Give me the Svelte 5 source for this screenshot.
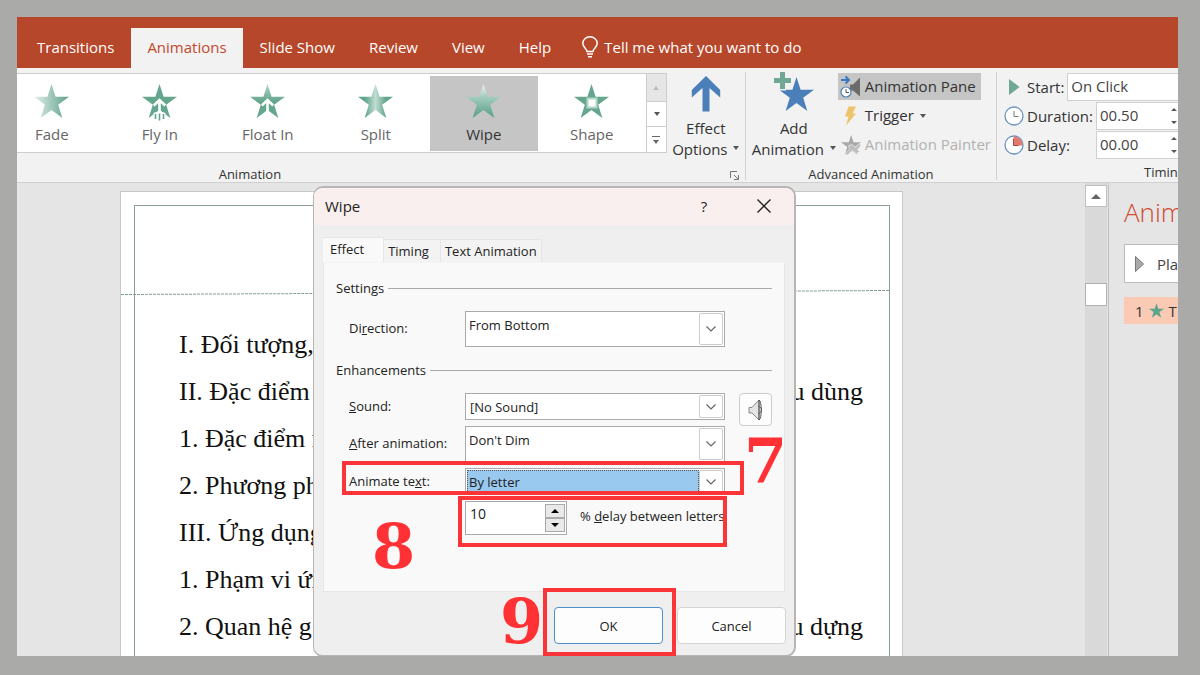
<script>
  const star = '17.5,0 21.6,12.7 35,12.7 24.2,20.7 28.3,34 17.5,25.9 6.7,34 10.8,20.7 0,12.7 13.4,12.7';

  const tabs = ['Transitions', 'Animations', 'Slide Show', 'Review', 'View', 'Help'];
  const effects = [
    { name: 'Fade', kind: 'fade' },
    { name: 'Fly In', kind: 'fly' },
    { name: 'Float In', kind: 'float' },
    { name: 'Split', kind: 'split' },
    { name: 'Wipe', kind: 'wipe' },
    { name: 'Shape', kind: 'shape' }
  ];
  const lines = [
    { start: 'I. Đối tượng,', end: '' },
    { start: 'II. Đặc điểm', end: 'u dùng' },
    { start: '1. Đặc điểm n', end: '' },
    { start: '2. Phương ph', end: '' },
    { start: 'III. Ứng dụng', end: '' },
    { start: '1. Phạm vi ứn', end: '' },
    { start: '2. Quan hệ g', end: 'u dựng' }
  ];
</script>

{#snippet chevron()}
  <span class="chevron">
    <svg viewBox="0 0 10 6" width="10" height="6"><path d="M.5.5 5 5 9.5.5" fill="none" stroke="#666" stroke-width="1.2" /></svg>
  </span>
{/snippet}

{#snippet caret()}
  <svg class="caret" viewBox="0 0 6 4" width="6" height="4"><path d="M0 0h6L3 4z" fill="#555" /></svg>
{/snippet}

<div class="page">
  <div class="window">
    <nav class="tabs">
      {#each tabs as tab}
        <button class="tab" class:active={tab === 'Animations'}>{tab}</button>
      {/each}
      <button class="tell">
        <svg viewBox="0 0 16 22" width="16" height="22" fill="none" stroke="#fff" stroke-width="1.5">
          <path d="M5 15.500c0-3-4.200-4-4.200-8.200a7.200 6.500 0 0 1 14.400 0c0 4.200-4.200 5.200-4.200 8.200zM5 18h6M6 20.700h4" />
        </svg>
        Tell me what you want to do
      </button>
    </nav>

    <div class="ribbon">
      <section class="group animation">
        <div class="tools">
          <div class="gallery">
            <div class="effects">
              {#each effects as effect}
                <button class="effect" class:selected={effect.kind === 'wipe'}>
                  <svg viewBox="0 0 36 38" width="36" height="38">
                    <defs>
                      <linearGradient id="g-fade"><stop offset="0" stop-color="#e4f0eb" /><stop offset="1" stop-color="#5b9f87" /></linearGradient>
                      <linearGradient id="g-float" x2="0" y2="1"><stop offset="0" stop-color="#b5d6ca" /><stop offset=".5" stop-color="#64a68e" /></linearGradient>
                      <linearGradient id="g-split"><stop offset=".2" stop-color="#60a48c" /><stop offset=".5" stop-color="#c2ddd3" /><stop offset=".8" stop-color="#60a48c" /></linearGradient>
                      <linearGradient id="g-wipe" x2="0" y2="1"><stop offset="0" stop-color="#f1f6f3" /><stop offset=".35" stop-color="#a8cfc1" /><stop offset="1" stop-color="#559e85" /></linearGradient>
                    </defs>
                    <polygon points={star} fill={effect.kind === 'fly' || effect.kind === 'shape' ? '#64a68e' : `url(#g-${effect.kind})`} />
                    {#if effect.kind === 'fly' || effect.kind === 'float'}
                      <path d="m11.800 21.500 5.700-5.500 5.700 5.500M17.500 16v12" fill="none" stroke="#fff" stroke-width="2.600" />
                    {/if}
                    {#if effect.kind === 'fly'}
                      <path d="M11.500 29 17.500 27l6 2v8h-12z" fill="#fff" />
                      <path d="M13.500 30v5M17.500 29.500v7M21.500 30v5" stroke="#64a68e" stroke-width="1.600" />
                    {/if}
                    {#if effect.kind === 'shape'}
                      <path d="M13.500 14.500h9v9h-9z" fill="#fff" stroke="#b4d6c9" stroke-width="2" />
                    {/if}
                  </svg>
                  <span>{effect.name}</span>
                </button>
              {/each}
            </div>
            <div class="scrollers">
              <button class="off" aria-label="Previous row"><svg viewBox="0 0 6 4" width="6" height="4"><path d="M0 4h6L3 0z" fill="#bbb" /></svg></button>
              <button aria-label="Next row">{@render caret()}</button>
              <button aria-label="More"><svg viewBox="0 0 8 8" width="8" height="8"><path d="M0 0h8v1H0zM1 4h6L4 8z" fill="#666" /></svg></button>
            </div>
          </div>
          <button class="big">
            <svg viewBox="0 0 30 36" width="30" height="36"><path d="M15 0 0.800 14v7.500L11.500 12v23.500h7V12l10.700 9.500V14z" fill="#4a7fba" /></svg>
            <span>Effect</span>
            <span>Options {@render caret()}</span>
          </button>
        </div>
        <h2>Animation
          <svg class="launcher" viewBox="0 0 9 9" width="9" height="9"><path d="M.5 7V.5H7M4 4l4 4M8.500 4v4.500H4" fill="none" stroke="#777" /></svg>
        </h2>
      </section>

      <section class="group advanced">
        <div class="tools">
          <button class="big add">
            <svg viewBox="0 0 42 40" width="42" height="40">
              <polygon points={star} transform="translate(6 5)" fill="#4a7fba" />
              <path d="M6-.5h7v6h6v7h-6v6H6v-6H0v-7h6z" fill="#f2f2f2" />
              <path d="M7 0h5v6h6v5h-6v6H7v-6H1V6h6z" fill="#70a893" />
            </svg>
            <span>Add</span>
            <span>Animation {@render caret()}</span>
          </button>
          <div class="stack">
            <button class="small pressed">
              <svg viewBox="0 0 22 24" width="22" height="24">
                <path d="M10 9.500h3l7-7v19l-7-6h-3z" fill="#6b6b6b" />
                <path d="M1 5h7M5.500 1.500 9 5 5.500 8.500" fill="none" stroke="#3b78bd" stroke-width="2" />
                <circle cx="6" cy="17" r="5" fill="#fff" stroke="#4a7fba" stroke-width="1.200" />
                <path d="M6 14v3.500h3" fill="none" stroke="#555" />
              </svg>
              <span>Animation Pane</span>
            </button>
            <button class="small">
              <svg viewBox="0 0 22 24" width="22" height="24"><path d="M8.500 2.500H16l-3.500 7H16L6 21.500l2.500-9H5z" fill="#efc36a" /></svg>
              <span>Trigger {@render caret()}</span>
            </button>
            <button class="small off" disabled>
              <svg viewBox="0 0 22 24" width="22" height="24"><polygon points={star} transform="translate(1 2) scale(.58)" fill="#a9a9a9" /><path d="m8.500 12.500 4-1 3 3 3.500-4 2 2-3.500 4 2 2-3 2-4-3-5 4.500-3-1 5-4.500z" fill="#bdbdbd" stroke="#f2f2f2" stroke-width=".6" /></svg>
              <span>Animation Painter</span>
            </button>
          </div>
        </div>
        <h2>Advanced Animation</h2>
      </section>

      <section class="group timing">
        <div class="stack">
          <div class="field">
            <svg viewBox="0 0 20 20" width="20" height="20"><path d="M5 2v16l10.500-8z" fill="#70a893" /></svg>
            <label for="start">Start:</label>
            <select id="start"><option>On Click</option></select>
          </div>
          <div class="field">
            <svg viewBox="0 0 20 20" width="20" height="20"><circle cx="10" cy="10" r="9" fill="#fff" stroke="#6d94c0" stroke-width="1.300" /><path d="M10 5v5.500h4.500" fill="none" stroke="#777" /></svg>
            <label class="wide" for="duration">Duration:</label>
            <input id="duration" value="00.50" />
            <span class="nudge"><svg viewBox="0 0 8 18" width="8" height="18"><path d="M1 4h6L4 1zM1 14h6l-3 3z" fill="#555" /></svg></span>
          </div>
          <div class="field">
            <svg viewBox="0 0 20 20" width="20" height="20"><circle cx="10" cy="10" r="9" fill="#fff" stroke="#6d94c0" stroke-width="1.300" /><path d="M9.500 10.500V1.500a8.500 8.500 0 0 1 9 9z" fill="#e5786d" /><path d="M9.500 4v6.500h5" fill="none" stroke="#a04a44" /></svg>
            <label class="wide" for="wait">Delay:</label>
            <input id="wait" value="00.00" />
            <span class="nudge"><svg viewBox="0 0 8 18" width="8" height="18"><path d="M1 4h6L4 1zM1 14h6l-3 3z" fill="#555" /></svg></span>
          </div>
        </div>
        <h2>Timing</h2>
      </section>
    </div>

    <main class="workspace">
      <div class="canvas">
        <article class="slide">
          <div class="frame">
            {#each lines as line}
              <p><span>{line.start}</span><span>{line.end}</span></p>
            {/each}
          </div>
          <svg class="guide" viewBox="0 0 768 5" height="5" preserveAspectRatio="none"><path d="M0 4.500 768 .5" stroke="#7f9c98" stroke-dasharray="3 1" /></svg>
        </article>
      </div>
      <div class="scrollbar">
        <button aria-label="Scroll up"><svg viewBox="0 0 10 5" width="10" height="5"><path d="M0 5h10L5 0z" fill="#666" /></svg></button>
        <div class="thumb"></div>
      </div>
      <aside class="pane">
        <h1>Anim</h1>
        <button class="play"><svg viewBox="0 0 9 16" width="9" height="16"><path d="M.5.500v15L8.500 8z" fill="#aaa" stroke="#777" /></svg>Play</button>
        <div class="entry">1 <svg viewBox="0 0 35 34" width="15" height="15"><polygon points={star} fill="#58a58a" /></svg> <span>T</span></div>
      </aside>

      <div class="dialog" role="dialog" aria-labelledby="dialog-title">
        <header>
          <h3 id="dialog-title">Wipe</h3>
          <button>?</button>
          <button aria-label="Close"><svg viewBox="0 0 14 14" width="14" height="14"><path d="m.5.500 13 13M13.500.500l-13 13" stroke="#222" stroke-width="1.400" /></svg></button>
        </header>
        <div class="dialog-tabs">
          <button class="current">Effect</button>
          <button class="timing-tab">Timing</button>
          <button>Text Animation</button>
        </div>
        <form class="sheet">
          <h4>Settings</h4>
          <div class="row direction">
            <label for="direction">Di<u>r</u>ection:</label>
            <div class="combo tall"><select id="direction"><option>From Bottom</option></select>{@render chevron()}</div>
          </div>
          <h4>Enhancements</h4>
          <div class="rows">
            <div class="row">
              <label for="sound"><u>S</u>ound:</label>
              <div class="combo"><select id="sound"><option>[No Sound]</option></select>{@render chevron()}</div>
              <button type="button" class="speaker" aria-label="Volume">
                <svg viewBox="0 0 16 22" width="16" height="22"><path d="M1 8.500h3L11 1v20l-7-7H1z" fill="#e4e4e4" stroke="#888" /><path d="M11 1c3 1 3 19 0 20M10.500 7.500c4 0 4 6.500 0 7M11 1v20" fill="none" stroke="#555" /></svg>
              </button>
            </div>
            <div class="row">
              <label for="after"><u>A</u>fter animation:</label>
              <div class="combo tall"><select id="after"><option>Don't Dim</option></select>{@render chevron()}</div>
            </div>
            <div class="row">
              <label for="animate">Animate te<u>x</u>t:</label>
              <div class="combo chosen"><select id="animate"><option>By letter</option></select>{@render chevron()}</div>
            </div>
            <div class="row">
              <span></span>
              <div class="percent">
                <div class="spin">
                  <input id="percent" value="10" />
                  <div class="steps">
                    <button type="button" aria-label="Increase"><svg viewBox="0 0 8 4" width="8" height="4"><path d="M0 4h8L4 0z" /></svg></button>
                    <button type="button" aria-label="Decrease"><svg viewBox="0 0 8 4" width="8" height="4"><path d="M0 0h8L4 4z" /></svg></button>
                  </div>
                </div>
                <label for="percent">% <u>d</u>elay between letters</label>
              </div>
            </div>
          </div>
        </form>
        <footer>
          <button class="ok">OK</button>
          <button>Cancel</button>
        </footer>

        <div class="mark mark-text"></div>
        <div class="mark mark-delay"></div>
        <div class="mark mark-ok"></div>
        <b class="step step-7">7</b>
        <b class="step step-8">8</b>
        <b class="step step-9">9</b>
      </div>
    </main>
  </div>
</div>

<style>
  :global(body) { margin: 0; }
  .page {
    box-sizing: border-box;
    height: 100vh;
    padding: 17px 22px 19px 17px;
    background: #aaaaa8;
    font-family: "Open Sans", "Noto Sans", sans-serif;
    font-size: 15px;
    color: #333;
  }
  .page :global(*) { box-sizing: border-box; }
  button, input, select { font: inherit; color: inherit; border: 0; padding: 0; margin: 0; background: none; border-radius: 0; }
  select { appearance: none; }
  h1, h2, h3, h4, p { margin: 0; font-weight: 400; }
  svg { flex: none; }
  .window { display: flex; flex-direction: column; height: 100%; overflow: hidden; background: #f2f2f2; }

  .tabs { display: flex; flex: none; height: 51px; padding: 11px 0 0 3px; background: #b7472a; color: #fff; white-space: nowrap; }
  .tab { padding: 0 17px 2px; }
  .tab.active { background: #f2f2f2; color: #c0492c; padding: 0 16px 2px; }
  .tell { display: flex; align-items: center; gap: 6px; padding: 0 0 2px 14px; }

  .ribbon { display: flex; flex: none; height: 115px; padding-top: 4px; border-bottom: 1px solid #d0d0d0; white-space: nowrap; }
  .group { display: flex; flex-direction: column; border-right: 1px solid #d2d2d2; margin-bottom: 2px; }
  .animation { flex: 1; min-width: 0; }
  .advanced { flex: 0 0 251px; }
  .timing { flex: 0 0 181px; border: 0; overflow: hidden; }
  .tools { display: flex; height: 88px; }
  .group h2 { flex: 1; display: flex; align-items: center; justify-content: center; padding-top: 5px; font-size: 13px; line-height: 18px; position: relative; }
  .group.animation h2 { padding-right: 262px; }
  .launcher { position: absolute; right: 6px; bottom: 3px; }
  .gallery { display: flex; flex: 1; min-width: 0; height: 80px; margin-top: 1px; border: 1px solid #cbcdd0; border-left: 0; background: #fff; }
  .effects { display: flex; flex: 1; min-width: 0; justify-content: flex-end; overflow: hidden; padding: 2px 0 1px; }
  .effect { display: flex; flex: 0 0 108px; flex-direction: column; align-items: center; padding-top: 8px; color: #666; line-height: 20px; }
  .effect svg { margin-bottom: 2px; }
  .effect.selected { background: #c5c5c5; color: #333; }
  .scrollers { display: grid; grid-template-rows: 28px 25px 25px; width: 20px; border-left: 1px solid #cbcdd0; }
  .scrollers button { display: grid; place-items: center; border-bottom: 1px solid #cbcdd0; }
  .scrollers button:last-child { border: 0; }
  .scrollers .off { background: #e6e6e6; }
  .big { display: flex; flex: 0 0 78px; flex-direction: column; align-items: center; padding-top: 4px; line-height: 21px; }
  .big svg:first-child { margin-bottom: 6px; }
  .caret { margin-left: 2px; vertical-align: middle; }
  .big.add { flex-basis: 92px; padding: 0 0 0 4px; }
  .stack { display: flex; flex-direction: column; gap: 2px; height: 88px; align-items: flex-start; padding-top: 1px; }
  .small { display: flex; align-items: center; height: 27px; gap: 3px; padding: 0 5px 0 2px; }
  .small span { padding-bottom: 2px; }
  .small.pressed { background: #c5c5c5; }
  .small.off { color: #b1b1b1; }
  .timing .stack { align-items: stretch; padding-left: 7px; }
  .field { display: flex; align-items: center; gap: 3px; height: 27px; }
  .field .wide { min-width: 66px; }
  .field select, .field input { flex: 1; min-width: 0; height: 28px; padding: 0 0 2px 3px; border: 1px solid #d0d0d0; border-right: 0; background: #fff; color: #444; }
  .nudge { display: flex; align-items: center; height: 28px; margin-left: -3px; background: #fff; border-top: 1px solid #d0d0d0; border-bottom: 1px solid #d0d0d0; }
  .group.timing h2 { justify-content: flex-start; padding-left: 147px; }

  .workspace { position: relative; display: flex; flex: 1; min-height: 0; background: #e5e5e5; }
  .canvas { flex: 1; min-width: 0; padding: 8px 182px 0 103px; }
  .slide { position: relative; height: 100%; padding: 13px 12px 0 13px; border: 1px solid #c8c8c8; border-bottom: 0; background: #fff; }
  .frame { height: 100%; padding: 115px 26px 0 44px; border: 1px solid #8a9c9c; border-bottom: 0; font: 26px/47px "Liberation Serif", "Times New Roman", serif; color: #111; }
  .frame p { display: flex; justify-content: space-between; white-space: nowrap; }
  .guide { position: absolute; top: 98px; left: 0; width: calc(100% - 12px); }
  .scrollbar { width: 23px; padding-top: 2px; background: #d9d9d9; border-right: 1px solid #e5e5e5; }
  .scrollbar button { display: grid; place-items: center; width: 22px; height: 22px; background: #fff; border: 1px solid #c0c0c0; }
  .thumb { width: 22px; height: 23px; margin-top: 76px; background: #fff; border: 1px solid #b0b0b0; }
  .pane { width: 70px; overflow: hidden; padding: 11px 0 0 15px; border-left: 1px solid #c0c0c0; white-space: nowrap; }
  .pane h1 { font-size: 26px; line-height: 36px; color: #cf4a30; font-weight: 300; }
  .play { display: flex; align-items: center; gap: 13px; width: 90px; height: 39px; margin-top: 14px; padding-left: 10px; border: 1px solid #bcbcbc; background: #fff; color: #444; }
  .entry { display: flex; align-items: center; gap: 5px; width: 90px; height: 27px; margin-top: 14px; padding-left: 11px; background: #fbcab5; }

  .dialog { position: absolute; left: 296px; top: 3px; width: 483px; height: 471px; border: 1px solid #b9b5b5; border-width: 2px 2px 2px 1px; border-radius: 10px; background: #efefef; font-size: 13px; color: #222; white-space: nowrap; }
  .dialog header { display: flex; align-items: center; height: 37px; padding: 0 0 2px 11px; background: #f9efee; border-radius: 9px 9px 0 0; }
  .dialog h3 { flex: 1; font-size: 15px; }
  .dialog header button { display: grid; place-items: center; width: 60px; height: 35px; font-size: 15px; }
  .dialog-tabs { display: flex; align-items: flex-end; height: 37px; padding-left: 9px; }
  .dialog-tabs button { height: 23px; padding: 0 4px; border: 1px solid #e6e6e6; border-left: 0; border-bottom: 0; background: #f3f3f3; }
  .dialog-tabs .current { height: 25px; padding: 0 19px 2px 7px; background: #f9f9f9; }
  .dialog-tabs .timing-tab { padding-right: 11px; }
  .sheet { height: 330px; margin: 0 9px; padding: 15px 12px 0; border: 1px solid #e6e6e6; border-top-color: #f4f4f4; background: #f9f9f9; }
  .sheet h4 { display: flex; align-items: center; gap: 4px; font-size: 13px; line-height: 20px; }
  .sheet h4::after { content: ""; flex: 1; height: 1px; background: #a9a9a9; }
  .rows { display: flex; flex-direction: column; gap: 6px; padding-top: 13px; }
  .row { display: grid; grid-template-columns: 116px 260px 33px; align-items: center; padding-left: 13px; }
  .row > label { padding-bottom: 2px; }
  .direction { padding-top: 13px; padding-bottom: 13px; }
  .combo { display: flex; height: 27px; padding: 1px; border: 1px solid #aaa; background: #fff; }
  .combo.tall { height: 36px; }
  .combo select { flex: 1; min-width: 0; padding-left: 3px; }
  .combo.tall select { padding-bottom: 8px; padding-left: 2px; }
  .chevron { display: grid; place-items: center; width: 24px; border: 1px solid #ccc; border-radius: 2px; }
  .combo.chosen select { padding-left: 1px; background: #99c9ef; border: 1px dotted #555; }
  .speaker { display: grid; place-items: center; width: 33px; height: 33px; margin: 0 0 -6px 14px; border: 1px solid #ccc; border-radius: 4px; background: #fdfdfd; }
  .percent { display: flex; gap: 13px; }
  .percent label { padding-top: 6px; }
  .spin { display: flex; width: 102px; height: 34px; border: 1px solid #aaa; background: #fff; }
  .spin input { flex: 1; min-width: 0; padding: 0 0 9px 4px; font-size: 14px; }
  .steps { display: grid; width: 22px; padding: 2px 1px; background: #fff; }
  .steps button { display: grid; place-items: center; border: 1px solid #aaa; background: #e9e9e9; }
  .dialog footer { display: flex; justify-content: flex-end; gap: 14px; padding: 15px 8px 0; }
  .dialog footer button { width: 109px; height: 37px; border: 1px solid #d4d4d4; border-radius: 4px; background: #fdfdfd; }
  .dialog footer .ok { border-color: #4a90cc; }

  .mark { position: absolute; border: 4px solid #fb3438; pointer-events: none; }
  .mark-text { left: 28px; top: 273px; width: 402px; height: 34px; }
  .mark-delay { left: 144px; top: 308px; width: 269px; height: 51px; }
  .mark-ok { left: 229px; top: 400px; width: 133px; height: 68px; }
  .step { position: absolute; color: #ff3135; font: 700 62px/62px "DejaVu Serif", serif; }
  .step-7 { left: 430px; top: 243px; }
  .step-8 { left: 58px; top: 328px; }
  .step-9 { left: 186px; top: 403px; }
</style>
